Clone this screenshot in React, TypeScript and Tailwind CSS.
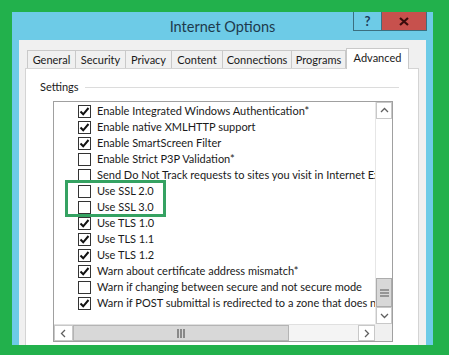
const tabs = [
  { label: 'General', w: 'w-[49px]' },
  { label: 'Security', w: 'w-[51px]' },
  { label: 'Privacy', w: 'w-[47px]' },
  { label: 'Content', w: 'w-[52px]' },
  { label: 'Connections', w: 'w-[70px]' },
  { label: 'Programs', w: 'w-[55px]' },
]

const settings = [
  { text: 'Enable Integrated Windows Authentication*', on: true },
  { text: 'Enable native XMLHTTP support', on: true },
  { text: 'Enable SmartScreen Filter', on: true },
  { text: 'Enable Strict P3P Validation*', on: false },
  { text: 'Send Do Not Track requests to sites you visit in Internet Explorer', on: false },
  { text: 'Use SSL 2.0', on: false },
  { text: 'Use SSL 3.0', on: false },
  { text: 'Use TLS 1.0', on: true },
  { text: 'Use TLS 1.1', on: true },
  { text: 'Use TLS 1.2', on: true },
  { text: 'Warn about certificate address mismatch*', on: true },
  { text: 'Warn if changing between secure and not secure mode', on: false },
  { text: 'Warn if POST submittal is redirected to a zone that does not permit posts', on: true },
]

const Check = ({ on }: { on: boolean }) => (
  <div className="w-[13px] h-[13px] border border-[#333] bg-white flex items-center justify-center shrink-0">
    {on && (
      <svg width="11" height="11" viewBox="0 0 11 11">
        <path d="M1.5 5.5 L4.2 8.3 L9.5 2" fill="none" stroke="#111" strokeWidth="2" />
      </svg>
    )}
  </div>
)

const Arrow = ({ dir }: { dir: 'up' | 'down' | 'left' | 'right' }) => {
  const d = {
    up: 'M2 7 L5.5 3.5 L9 7',
    down: 'M2 4 L5.5 7.5 L9 4',
    left: 'M7 2 L3.5 5.5 L7 9',
    right: 'M4 2 L7.5 5.5 L4 9',
  }[dir]
  return (
    <svg width="11" height="11" viewBox="0 0 11 11">
      <path d={d} fill="none" stroke="#606060" strokeWidth="1.3" />
    </svg>
  )
}

export default function App() {
  return (
    <div
      className="relative w-[449px] h-[355px] overflow-hidden bg-[#22b14c] pt-[12px] pl-[12px]"
      style={{ fontFamily: 'Lato, "Noto Sans", sans-serif' }}>
      <div className="w-[421px] h-[333px] bg-[#6dcbe7] flex flex-col">
        {/* title bar */}
        <div className="grid grid-cols-[1fr_auto_1fr] h-[28px] shrink-0">
          <div />
          <div className="text-[14.5px] leading-[29px] text-[#1d3a4c]">Internet Options</div>
          <div className="flex justify-end pr-[6px]">
            <div className="w-[28px] h-[19px] border-l border-b border-[#3b6f80] flex items-center justify-center text-[13px] font-bold text-[#1c3b5a] leading-none">
              ?
            </div>
            <div className="w-[46px] h-[19px] bg-[#c7514d] border-l border-b border-r border-[#3b6f80] flex items-center justify-center">
              <svg width="10" height="9" viewBox="0 0 10 9">
                <path d="M1 1 L9 8 M9 1 L1 8" stroke="#3a0c0c" strokeWidth="2.2" />
              </svg>
            </div>
          </div>
        </div>

        {/* client area */}
        <div className="flex-1 mx-[7px] bg-[#f0f0f0] pt-[8px] pl-[6px] pr-[7px] flex flex-col text-[11px] text-[#1a1a1a]">
          <div className="flex items-end h-[20px] ml-[2px] relative z-10">
            {tabs.map(t => (
              <div
                key={t.label}
                className={`${t.w} h-[18px] border border-b-0 border-[#c9c9c9] -ml-px first:ml-0 flex items-center justify-center leading-none bg-[#f0f0f0]`}>
                {t.label}
              </div>
            ))}
            <div className="w-[63px] h-[21px] -mb-px border border-b-0 border-[#c9c9c9] bg-white flex items-start pt-[3px] justify-center leading-none">
              Advanced
            </div>
          </div>

          <div className="flex-1 bg-white border border-b-0 border-[#d4d4d4] pt-[10px]">
            <div className="flex items-center h-[16px] pl-[14px] pr-[19px]">
              <span>Settings</span>
              <div className="flex-1 h-px bg-[#dcdcdc] ml-[6px]" />
            </div>

            <div className="mt-[6px] ml-[27px] w-[340px] h-[241px] border border-[#a0a0a0] grid grid-cols-[1fr_17px] grid-rows-[1fr_17px] text-[#1a1a1a]">
              <div className="overflow-hidden pt-px">
                {settings.map(s => (
                  <div key={s.text} className="flex items-center h-[16px] pl-[24px] whitespace-nowrap">
                    <Check on={s.on} />
                    <span className="ml-[6px]">{s.text}</span>
                  </div>
                ))}
              </div>

              {/* vertical scrollbar */}
              <div className="bg-white border-l border-[#e6e6e6] flex flex-col">
                <div className="h-[17px] border border-[#c8c8c8] flex items-center justify-center">
                  <Arrow dir="up" />
                </div>
                <div className="flex-1" />
                <div className="h-[29px] bg-[#d8d8d8] border border-[#acacac] flex items-center justify-center">
                  <svg width="9" height="8" viewBox="0 0 9 8">
                    <path d="M0 1 H9 M0 4 H9 M0 7 H9" stroke="#555" strokeWidth="1.2" />
                  </svg>
                </div>
                <div className="h-[17px] border border-[#c8c8c8] flex items-center justify-center">
                  <Arrow dir="down" />
                </div>
              </div>

              {/* horizontal scrollbar */}
              <div className="flex bg-[#f4f4f4] border-t border-[#e0e0e0]">
                <div className="w-[19px] border border-[#c8c8c8] bg-white flex items-center justify-center">
                  <Arrow dir="left" />
                </div>
                <div className="w-[216px] bg-[#d8d8d8] border border-[#b4b4b4] flex items-center justify-center">
                  <svg width="8" height="9" viewBox="0 0 8 9">
                    <path d="M1 0 V9 M4 0 V9 M7 0 V9" stroke="#555" strokeWidth="1.2" />
                  </svg>
                </div>
                <div className="flex-1" />
                <div className="w-[17px] border border-[#c8c8c8] bg-white flex items-center justify-center">
                  <Arrow dir="right" />
                </div>
              </div>
              <div className="bg-[#f0f0f0]" />
            </div>
          </div>
        </div>
      </div>

      {/* highlight around SSL options */}
      <div className="absolute left-[65px] top-[180px] w-[101px] h-[37px] border-[3px] border-[#35a262]" />
    </div>
  )
}
